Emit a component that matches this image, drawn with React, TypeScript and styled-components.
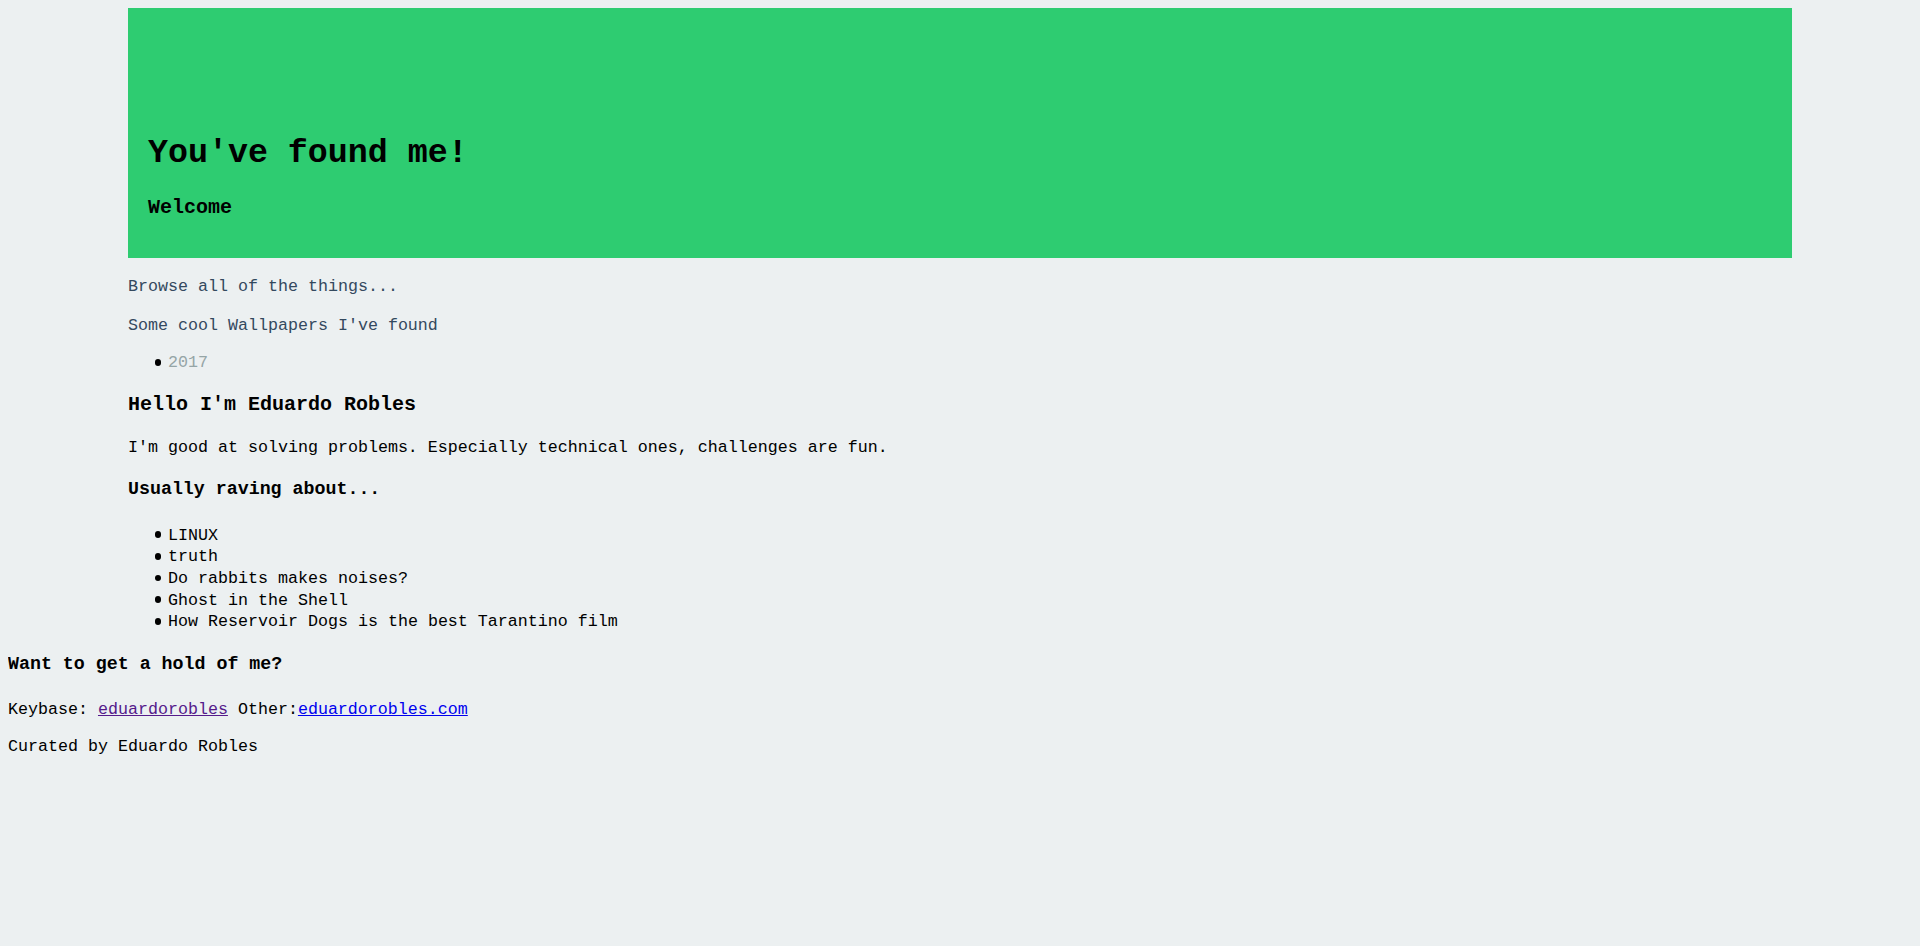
import React from "react";
import styled, { createGlobalStyle } from "styled-components";

const GlobalStyle = createGlobalStyle`
  html, body {
    background: #ecf0f1;
  }
  body {
    margin: 8px;
    font-family: "Liberation Mono", "DejaVu Sans Mono", monospace;
    font-size: 16.67px;
    line-height: 1.3;
    color: #000;
  }
`;

const Container = styled.div`
  width: 1664px;
  margin: 0 auto;
`;

const Hero = styled.header`
  height: 250px;
  box-sizing: border-box;
  background: #2ecc71;
  display: flex;
  flex-direction: column;
  justify-content: flex-end;
  padding: 0 20px 37px;
`;

const HeroTitle = styled.h1`
  margin: 0 0 19.5px;
  font-size: 33.3px;
  line-height: 1.3;
  font-weight: 700;
`;

const HeroSubtitle = styled.h2`
  margin: 0;
  font-size: 20px;
  line-height: 1.3;
  font-weight: 700;
`;

const Content = styled.main`
  padding-top: 18.4px;
`;

const Muted = styled.p<{ $gap: number }>`
  margin: 0 0 ${(p) => p.$gap}px;
  color: #34495e;
`;

const List = styled.ul<{ $gap: number }>`
  margin: 0 0 ${(p) => p.$gap}px;
  padding-left: 40px;
  list-style: none;
`;

const Item = styled.li<{ $faded?: boolean }>`
  position: relative;
  color: ${(p) => (p.$faded ? "#95a5a6" : "#000")};
  &::before {
    content: "";
    position: absolute;
    left: -13.5px;
    top: 6.8px;
    width: 6.5px;
    height: 6.5px;
    border-radius: 50%;
    background: #000;
  }
`;

const Heading = styled.h2<{ $size: number; $gap: number }>`
  margin: 0 0 ${(p) => p.$gap}px;
  font-size: ${(p) => p.$size}px;
  line-height: 1.3;
  font-weight: 700;
`;

const Text = styled.p<{ $gap: number }>`
  margin: 0 0 ${(p) => p.$gap}px;
`;

const Footer = styled.footer`
  padding-top: 20.2px;
`;

const Link = styled.a<{ $visited?: boolean }>`
  color: ${(p) => (p.$visited ? "#551a8b" : "#0000ee")};
  text-decoration: underline;
`;

export default function App() {
  return (
    <>
      <GlobalStyle />
      <Container>
        <Hero>
          <HeroTitle>You've found me!</HeroTitle>
          <HeroSubtitle>Welcome</HeroSubtitle>
        </Hero>
        <Content>
          <Muted $gap={16.6}>Browse all of the things...</Muted>
          <Muted $gap={16}>Some cool Wallpapers I've found</Muted>
          <List $gap={18.3}>
            <Item $faded>2017</Item>
          </List>
          <Heading $size={20} $gap={18.6}>
            Hello I'm Eduardo Robles
          </Heading>
          <Text $gap={19.5}>
            I'm good at solving problems. Especially technical ones, challenges are fun.
          </Text>
          <Heading $size={18.3} $gap={22.7}>
            Usually raving about...
          </Heading>
          <List $gap={0}>
            <Item>LINUX</Item>
            <Item>truth</Item>
            <Item>Do rabbits makes noises?</Item>
            <Item>Ghost in the Shell</Item>
            <Item>How Reservoir Dogs is the best Tarantino film</Item>
          </List>
        </Content>
      </Container>
      <Footer>
        <Heading $size={18.3} $gap={21.7}>
          Want to get a hold of me?
        </Heading>
        <Text $gap={15.3}>
          Keybase: <Link $visited href="#keybase">eduardorobles</Link> Other:
          <Link href="#other">eduardorobles.com</Link>
        </Text>
        <Text $gap={0}>Curated by Eduardo Robles</Text>
      </Footer>
    </>
  );
}
